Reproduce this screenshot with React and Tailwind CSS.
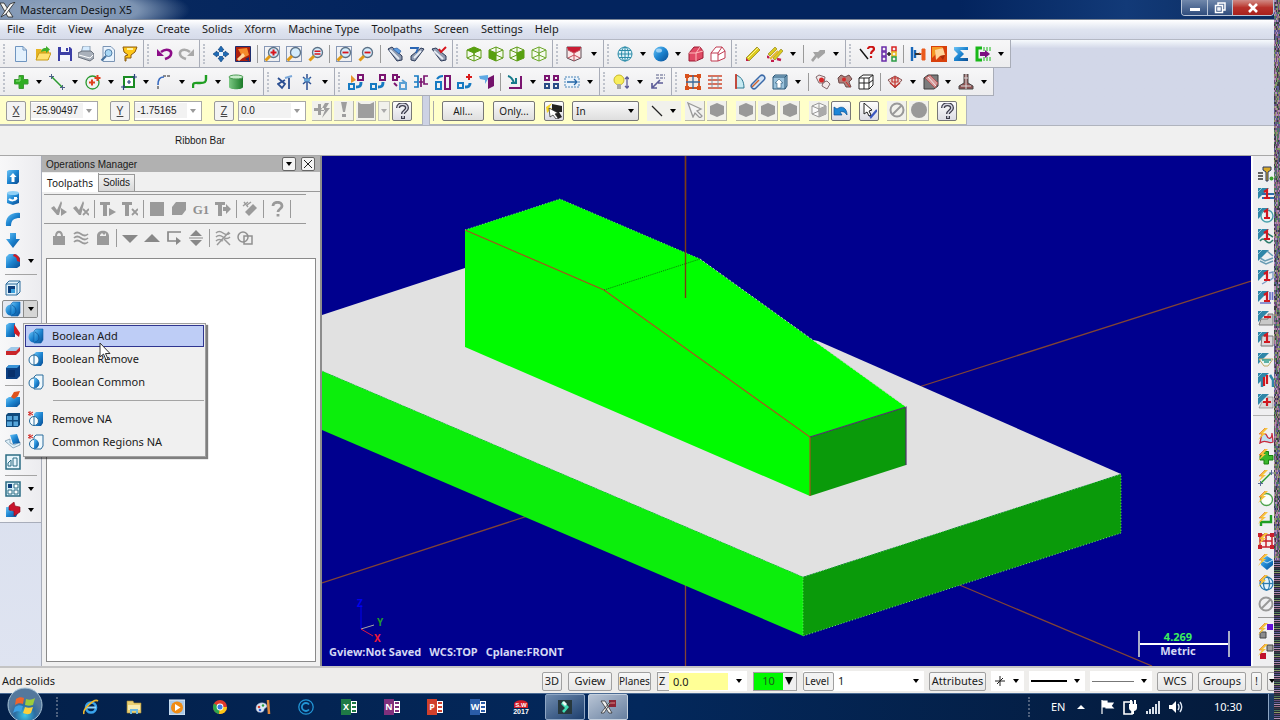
import { useState } from "react";

// small drawings, all on a 16 x 16 grid
const BLUE = "url(#blue)";
const cubeLines = "M8 1L15 4V12L8 15L1 12V4ZM1 4L8 7L15 4M8 7V15M1 12L8 9L15 12M8 1V9";
const hexPath = "M8 1L15 4V12L8 15L1 12V4Z";

function Lens({ inner, dashed }) {
    return (
        <g fill="none">
            {dashed && <path d="M.5 .5H15.500V15.500H.5Z" stroke="#1d3f78" strokeDasharray="1 1" />}
            <circle cx="9.5" cy="6.5" r="5" fill="#d3ecfb" stroke="#5c7186" strokeWidth="1.3" />
            <path d="M6 10L1.5 14.5" stroke="#e09a16" strokeWidth="3" />
            {inner}
        </g>
    );
}

function Bolt() {
    return (
        <>
            <path d="M7 0L1 6L4 6L0 12L8 5L5 5L10 0Z" fill="#f6c33c" />
            <path d="M7 0L1 6L4 6" fill="none" stroke="#e0762a" strokeWidth=".7" />
        </>
    );
}

function Tp({ children, red = "M6 5L9 3V11M6 11H12" }) {
    return (
        <>
            <path d="M0 1H11L0 12Z" fill="#2f86a8" />
            <path d="M0 5L4 1" stroke="#8fc6da" />
            {children}
            <path d={red} fill="none" stroke="#d01820" strokeWidth="2.2" />
        </>
    );
}

const ICONS = {
    new: <path d="M2.500.5H10L13.500 4V15.500H2.500Z M10 .5V4H13.500" fill="#e3f1fd" stroke="#6f95c0" />,
    open: <><path d="M1 3H6L8 5H14V14H1Z" fill="#e6b420" /><path d="M1 14L4 7H16L13 14Z" fill="#ffe272" stroke="#c89a18" /><path d="M6 6C7 2 9 2 11 2V0L15 3.500L11 7V5C9 5 8 5 6 6" fill="#3fae2c" /></>,
    save: <><path d="M1 1H13L15 3V15H1Z" fill="#3c3fa6" /><path d="M4 1H12V6H4ZM3 9H13V15H3Z" fill="#f4f5fb" /><path d="M9 2H11V5H9Z" fill="#3c3fa6" /></>,
    print: <><path d="M3 7L5 0H12L12 7" fill="#d6ecff" stroke="#8da0b4" /><path d="M0 7L4 5H13L16 8V12L12 15L0 11Z" fill="#a9b0ba" stroke="#69717c" /><path d="M1 9L12 12L15 9" stroke="#fff" fill="none" /></>,
    preview: <><path d="M3 .5H11L14.500 4V15.500H3Z" fill="#e9f3fd" stroke="#7a94b4" /><circle cx="8.500" cy="7" r="3.500" fill="#a9d7f5" stroke="#4f7ba5" /><path d="M6 10L1.500 14.500" stroke="#44709c" strokeWidth="2.200" /></>,
    cup: <><path d="M1 1H15L13 6L9 9V12H4V15H3V10L6 9L2 6Z" fill="#ffc818" stroke="#8c5a0c" /><path d="M5 3H11" stroke="#fff3a8" strokeWidth="2" /></>,
    undo: <><path d="M4 6C9 2 15 4 14 8C14 11 11 12 8 13" fill="none" stroke="#8c0c88" strokeWidth="2.600" /><path d="M0 3V10H7Z" fill="#8c0c88" /></>,
    redo: <><path d="M12 6C7 2 1 4 2 8C2 11 5 12 8 13" fill="none" stroke="#a9a9a9" strokeWidth="2.600" /><path d="M16 3V10H9Z" fill="#a9a9a9" /></>,
    fit: <><path d="M8 0L11 4H9.500V6.500H12V5L16 8L12 11V9.500H9.500V12H11L8 16L5 12H6.500V9.500H4V11L0 8L4 5V6.500H6.500V4H5Z" fill="#1f6bb5" stroke="#0d3f7a" strokeWidth=".6" /><path d="M6 6H10V10H6Z" fill="#e8f4ff" /></>,
    repaint: <><path d="M.5 .5H15.500V15.500H.5Z" fill="#b0200c" stroke="#1d2d6e" /><path d="M3 3L12 2L14 9L8 12Z" fill="#f58a2a" /><path d="M2 13L8 7L10 10L4 15Z" fill="#ffd7a0" /><path d="M10 13L14 11V15Z" fill="#1d2d6e" /></>,
    zoomWin: <Lens dashed inner={<path d="M9.500 3.500V9.500M6.500 6.500H12.500" stroke="#d8141c" strokeWidth="2" />} />,
    zoomSel: <Lens dashed />,
    zoomIn: <Lens inner={<path d="M6.500 5.200H12.500M6.500 8H12.500" stroke="#d8141c" strokeWidth="1.600" />} />,
    zoomOutW: <Lens dashed inner={<path d="M6.500 6.500H12.500" stroke="#d8141c" strokeWidth="1.800" />} />,
    zoomOut: <Lens inner={<path d="M6.500 6.500H12.500" stroke="#d8141c" strokeWidth="1.800" />} />,
    tube: <><path d="M1 3L5 1L15 10L15 14L10 15Z" fill="#8f9bb0" stroke="#2c3a58" /><path d="M3 4L12 13" stroke="#e6ebf4" strokeWidth="2" /><path d="M6 3L10 2L14 5L12 8Z" fill="#5a9be0" stroke="#1c4f96" strokeWidth=".6" /></>,
    tube2: <><path d="M15 3L12 2L2 10L2 14L6 15Z" fill="#8f9bb0" stroke="#2c3a58" /><path d="M12 5L5 12" stroke="#e6ebf4" strokeWidth="2" /><path d="M1 2H9L7 7" fill="none" stroke="#2a66b4" strokeWidth="1.800" /></>,
    tube3: <><path d="M1 3L5 2L15 10L15 14L10 15Z" fill="#8f9bb0" stroke="#2c3a58" /><path d="M3 5L12 13" stroke="#e6ebf4" strokeWidth="2" /><path d="M8 3L10 6L15 1" fill="none" stroke="#d8141c" strokeWidth="2" /></>,
    cubeTop: <><path d={cubeLines} fill="#f6fbee" stroke="#5c9a14" /><path d="M8 1L15 4L8 7L1 4Z" fill="#58a010" /></>,
    cubeFront: <><path d={cubeLines} fill="#f6fbee" stroke="#5c9a14" /><path d="M1 4L8 7V15L1 12Z" fill="#58a010" /></>,
    cubeRight: <><path d={cubeLines} fill="#f6fbee" stroke="#5c9a14" /><path d="M15 4L8 7V15L15 12Z" fill="#58a010" /></>,
    cubeIso: <path d={cubeLines} fill="#f6fbee" stroke="#6aa628" />,
    cubeRed: <><path d="M1 1H15V12L8 15L1 12Z" fill="#fbe9ea" stroke="#5f4a52" /><path d="M1 1H15L14 4L8 7L2 4Z" fill="#c91c34" /><path d="M2 4L8 7L14 4M8 7V15M2 12L8 9L14 12" fill="none" stroke="#c44a58" /></>,
    globe: <g fill="none" stroke="#2b8ba8"><circle cx="8" cy="8" r="7" fill="#dff3fa" /><ellipse cx="8" cy="8" rx="3.500" ry="7" /><path d="M1 8H15M2 4.500H14M2 11.500H14M8 1V15" /></g>,
    sphere: <><circle cx="8" cy="8" r="7.500" fill={BLUE} /><ellipse cx="6" cy="4.500" rx="3" ry="2" fill="#b6defa" opacity=".8" /></>,
    solidRed: <><path d="M1 7L6 1H12L15 5V12L8 15H1Z" fill="#e04a64" stroke="#9c1c34" /><path d="M1 7H8L12 1M8 7V15M8 7L15 5" fill="none" stroke="#fbb" /></>,
    wireRed: <path d="M1 7L6 1H12L15 5V12L8 15H1ZM1 7H8V15M8 7L12 1M8 9L15 5" fill="#fff" stroke="#c03a50" />,
    pencil: <><path d="M1 12L12 1L15 4L4 15Z" fill="#dccb1e" stroke="#8a7a10" strokeWidth=".7" /><path d="M3 12L13 2" stroke="#fff68c" /><path d="M1 12L4 15L1 15Z" fill="#c21c4c" /></>,
    pencils: <><path d="M1 8L8 1L10 3L3 10ZM6 12L14 3L16 5L8 14Z" fill="#dccb1e" stroke="#8a7a10" strokeWidth=".6" /><path d="M3 13L11 5" stroke="#e5b832" strokeWidth="2" /><path d="M0 10L2 12M4 15L7 15M10 13L14 14" stroke="#c21c4c" strokeWidth="2.400" /></>,
    pencilOff: <path d="M1 14L5 9L3 6H8L10 4H15V7L8 13L7 11L3 16Z" fill="#a3a3a3" />,
    lineQ: <><path d="M1 3L9 13" stroke="#111" strokeWidth="1.400" /><path d="M9 3C9 0 15 0 15 3C15 5 12 5 12 8M12 10V12" fill="none" stroke="#cc1414" strokeWidth="2.200" /></>,
    colors: <g fill="none" strokeWidth="1.500"><path d="M1 1H5V5H1Z" stroke="#6a2ca8" /><path d="M1 6H5V10H1Z" stroke="#6a2ca8" /><path d="M1 11H5V15H1Z" stroke="#6a2ca8" /><path d="M11 1H15V5H11Z" stroke="#d82424" /><path d="M11 6H15V10H11Z" stroke="#e8b418" /><path d="M11 11H15V15H11Z" stroke="#2c9c44" /><path d="M6 8H10M8 6V10" stroke="#222" /></g>,
    bars: <><path d="M2 1V15M5 4V12" stroke="#1766b8" strokeWidth="2.400" /><path d="M5 8H11" stroke="#333" strokeWidth="2" /><path d="M9 7L12 8V3H15V14H12V9" fill="#ea5a1c" stroke="#ea5a1c" /></>,
    orange: <><path d="M0 0H16V16H0Z" fill="#d8400c" /><path d="M1 1H12L1 12Z" fill="#f59a24" /><path d="M4 4L12 2L14 9L9 10L5 14Z" fill="#ffd49a" /><path d="M9 10L14 9L12 14Z" fill="#a82c08" /></>,
    sigma: <path d="M1 1H15V4H7L11 8L7 12H15V15H1V12L5 8L1 4Z" fill={BLUE} />,
    export: <><path d="M7 2H2V14H7" fill="none" stroke="#18b818" strokeWidth="3" /><path d="M9 1V5M12 1V5M15 1V5M9 11V15M12 11V15M15 11V15" stroke="#18b818" /><path d="M5 6H10V4L15 8L10 12V10H5Z" fill="#7c1080" /></>,
    plus: <><path d="M6 1.500H10.500V5.500H15V10H10.500V14.500H6V10H1.500V5.500H6Z" fill="#2fae22" stroke="#3c9a34" /><path d="M7 3V7H3" fill="none" stroke="#8ee080" /></>,
    line: <><path d="M3 3L13 13" stroke="#2a9a30" strokeWidth="1.500" /><path d="M0 2.500H5M2.500 0V5M11 13.500H16M13.500 11V16" stroke="#4f6288" /></>,
    circle: <><circle cx="7.500" cy="8.500" r="6.500" fill="none" stroke="#2a9a30" strokeWidth="1.300" /><path d="M7 5.500V11.500M4 8.500H10M12.500 1V7M9.500 4H15.500" stroke="#e0401c" strokeWidth="2" /></>,
    rect: <><path d="M3 3H13V13H3Z" fill="#fff" stroke="#1b8c24" strokeWidth="2" /><path d="M8 6V10M6 8H10M0 13H5M2.500 11V16M11 3H16M13.500 0V5" stroke="#2b4480" strokeWidth="1.200" /></>,
    fillet: <><path d="M2 15V11M7 2H15" stroke="#222" strokeDasharray="3 1" /><path d="M2 11C2 5 4 3 8 3" fill="none" stroke="#3a6cc0" strokeWidth="1.700" /></>,
    spline: <path d="M1 14V12C1 8 3 9 8 9C13 9 14 8 14 5V1" fill="none" stroke="#1f9e22" strokeWidth="2.400" />,
    cylinder: <><path d="M1 3V13C1 16 15 16 15 13V3Z" fill="url(#green)" /><ellipse cx="8" cy="3" rx="7" ry="2" fill="#c9eccb" stroke="#4c9c55" /></>,
    cut: <><path d="M1 4L8 10L5 14L1 10L8 6M12 4V15" fill="none" stroke="#2b4f92" strokeWidth="1.800" /><path d="M8 4L15 2" stroke="#7aa7d8" strokeWidth="2" /></>,
    burst: <><path d="M8 0V16M4 3L12 10M12 3L4 10" stroke="#2b4f92" strokeWidth="1.500" /><path d="M5 6H11" stroke="#68a8d8" strokeWidth="3" /></>,
    x1: <><path d="M10 1H15V6H10Z" fill="none" stroke="#7a1470" strokeWidth="2" /><path d="M1 10H6V15H1Z" fill="none" stroke="#167ac2" strokeWidth="2" /><path d="M8 13C12 13 13 12 13 8" fill="none" stroke="#167ac2" strokeWidth="3" /><path d="M3 1L8 6L3 9Z" fill="#e8942c" /></>,
    x2: <><path d="M10 1H15V6H10Z" fill="none" stroke="#7a1470" strokeWidth="2" /><path d="M1 10H6V15H1Z" fill="none" stroke="#167ac2" strokeWidth="2" /><path d="M8 13C12 13 13 12 13 8" fill="none" stroke="#167ac2" strokeWidth="3" /></>,
    x3: <><path d="M1 1H5V6H1ZM6 3H8" fill="none" stroke="#7a1470" strokeWidth="2" /><path d="M8 9H14V15H8ZM10 6L14 9" fill="none" stroke="#5aa0d4" strokeWidth="2" /><path d="M2 9L5 12" stroke="#7a1470" strokeWidth="2" /></>,
    x4: <><path d="M1 2H5V13H1M5 8H1" fill="none" stroke="#167ac2" strokeWidth="1.700" /><path d="M15 2H11V10H15M8 4V13M6 8H10" fill="none" stroke="#7a1470" strokeWidth="1.700" /></>,
    x5: <><path d="M10 2H15V15H10Z" fill="none" stroke="#7a1470" strokeWidth="2" /><path d="M1 8H6V15H1ZM2 5C4 2 6 2 8 2" fill="none" stroke="#167ac2" strokeWidth="2" /></>,
    x6: <><path d="M1 9H6V14H1Z" fill="none" stroke="#167ac2" strokeWidth="2" /><path d="M8 13C12 13 13 12 13 9" fill="none" stroke="#167ac2" strokeWidth="3" /><path d="M12 0V6M9 3H15" stroke="#d81a1a" strokeWidth="2" /></>,
    x7: <><path d="M9 4L15 1V12L9 15Z" fill="#74126c" /><path d="M0 2L9 1V5L6 10V6L1 5Z" fill="#5fa9e4" /></>,
    x8: <><path d="M1 2C5 3 6 6 7 9M4 9H9V4" fill="none" stroke="#167a8a" strokeWidth="2" /><path d="M2 14H14V2" fill="none" stroke="#7a1470" strokeWidth="2" /></>,
    grid4: <g fill="none" strokeWidth="2"><path d="M2 2H6V6H2ZM11 2H15V6H11Z" stroke="#7a1470" /><path d="M2 10H6V14H2ZM11 10H15V14H11Z" stroke="#2a4c86" /></g>,
    stretch: <><path d="M1 3H15V13H1Z" fill="#eaf3fb" stroke="#4c86b8" strokeDasharray="2 1" /><path d="M3 8H13M10 5L13 8L10 11" fill="none" stroke="#2668a8" strokeWidth="1.300" /></>,
    bulb: <><circle cx="6" cy="6" r="5" fill="#f8ee5c" stroke="#c8b82c" /><path d="M4 10H8V15H4Z" fill="#a8a8a8" /><path d="M14 3V14M12 5L14 3L16 5M12 12L14 14L16 12" stroke="#5c5c98" fill="none" strokeWidth="1.300" /></>,
    dim: <><path d="M6 1H15M6 4H15" stroke="#555a86" strokeDasharray="3 1" /><path d="M10 6L2 14M2 9V14H7M8 9H13" fill="none" stroke="#5c5c98" strokeWidth="1.700" /></>,
    net: <><path d="M2 2H14V14H2Z" fill="#f4e8e0" stroke="#d8501c" strokeWidth="1.800" /><path d="M8 1V15M1 8H15" stroke="#37689c" strokeWidth="1.300" /><path d="M0 0H4V4H0ZM12 0H16V4H12ZM0 12H4V16H0ZM12 12H16V16H12Z" fill="#d8501c" /></>,
    ruled: <><path d="M1 2H15M1 14H15M1 6H15M1 10H15" stroke="#d0482c" strokeWidth="1.700" /><path d="M5 2V14M11 2V14" stroke="#8a8f98" /></>,
    revolve: <><path d="M7 1C13 3 15 8 15 14H7Z" fill="#c6eaf2" stroke="#2d7891" /><path d="M7 0V15" stroke="#d0301c" strokeWidth="1.600" /></>,
    sweep: <><path d="M4 12L12 4" stroke="#3c6aa8" strokeWidth="7" strokeLinecap="round" /><path d="M4 12L12 4" stroke="#d4e4f5" strokeWidth="4" strokeLinecap="round" /><path d="M2 13L9 6" stroke="#d0602c" strokeWidth="1.500" /></>,
    box: <><path d="M1 3L3 1H15V12L13 15H1Z" fill="#9cc3dc" stroke="#2c5878" /><path d="M1 3H13V15M13 3L15 1" fill="none" stroke="#2c5878" /><path d="M7 5L11 9H9V14H5V9H3Z" fill="#fff" stroke="#2c5878" strokeWidth=".6" /></>,
    flower: <><path d="M1 3L4 1L10 3L9 9L4 9ZM8 8L12 7L15 10L12 15L7 12Z" fill="#f0e8e8" stroke="#84686c" /><circle cx="6.500" cy="6" r="2.500" fill="#d82828" /></>,
    flower2: <><path d="M1 4L4 1L8 3L12 1L15 5L12 8L14 13H9L7 9L2 9Z" fill="#b0827c" stroke="#6c4a4a" /><circle cx="7" cy="5.500" r="2" fill="#d82828" /><path d="M9 8L13 13" stroke="#d82828" /></>,
    cubeWire: <path d="M1 4L5 1H15V11L11 15H1ZM1 4H11V15M11 4L15 1M6 4V15M1 9H11L15 6" fill="#fff" stroke="#222" />,
    drill: <><path d="M1 6L8 2L15 6L8 14Z" fill="#e9d6d2" stroke="#8a5656" /><path d="M5 4H11V8H5ZM8 2V13M3 9L8 13L13 9" stroke="#c2302c" fill="none" strokeWidth="1.200" /></>,
    slab: <><path d="M1 4L5 1H15V12L11 15H1Z" fill="#7c7c7c" stroke="#3c3c3c" /><path d="M2 4L12 14L15 9L7 1Z" fill="#d89898" stroke="#a55" /><path d="M5 3L13 12" stroke="#eee" /></>,
    tower: <><path d="M6 0H10V9L15 12V15H1V12L6 9Z" fill="#8f5252" stroke="#4a4a4a" /><path d="M3 12H13M8 0V15M6 4H10" stroke="#ddd" /></>,
    spark: <path d="M0 6H4V2H7V6H10V9H7V13H4V9H0ZM11 1L7 8H11L8 16L16 6H12L15 1Z" fill="#9e9e9e" />,
    bang: <path d="M5 0H11L9 10H7ZM6 12H10V15H6Z" fill="#9e9e9e" />,
    blob: <path d="M0 0L3 2H12L16 0V16H0Z" fill="#9e9e9e" />,
    help: <><path d="M4 5C4 0 13 0 13 5C13 8 9 8 9 11M9 13V16" fill="none" stroke="#3a3a48" strokeWidth="4" /><path d="M4 5C4 0 13 0 13 5C13 8 9 8 9 11M9 13V15" fill="none" stroke="#d8d8e4" strokeWidth="1.500" /></>,
    pick: <><path d="M0 4L6 0L3 5H6L1 10" fill="#f4d428" /><path d="M6 1L16 3V9H13L16 14L12 16L9 11L6 9Z" fill="#222" /><path d="M3 5L12 10L9 11L12 15L10 16L7 12L4 14Z" fill="#fff" stroke="#222" strokeWidth=".7" /></>,
    diag: <path d="M3 3L13 13" stroke="#222" strokeWidth="1.300" />,
    arrow: <path d="M1 1L14 7L10 9L15 14L13 16L8 11L6 15Z" fill="#f4f4f4" stroke="#999" strokeWidth="1.300" />,
    hex: <path d={hexPath} fill="#999" />,
    cubeGray: <><path d={cubeLines} fill="#fafafa" stroke="#999" /><path d="M15 4L8 7V15L15 12Z" fill="#aaa" /></>,
    back: <path d="M1 4V12H9L7 9C10 8 12 9 14 12C14 5 9 2 4 6Z" fill="#1c86d8" stroke="#0c4f94" strokeWidth=".7" />,
    tick: <><path d="M8 10L10 14L16 7" fill="none" stroke="#3c58c0" strokeWidth="2.200" /><path d="M3 0L11 7L8 8L10 12L8 13L6 9L3 11Z" fill="#fff" stroke="#222" /></>,
    no: <g fill="none" stroke="#999" strokeWidth="2"><circle cx="8" cy="8" r="6.500" /><path d="M3.500 12.500L12.500 3.500" /></g>,
    dot: <circle cx="8" cy="8" r="8" fill="#999" />,
    // operations manager, all greyed out
    selAll: <path d="M0 7L3 5L6 9L10 0L11 2L8 14H6ZM10 7L16 11L10 15Z" fill="#9a9a9a" />,
    selNone: <><path d="M0 7L3 5L6 9L10 0L11 2L8 14H6Z" fill="#9a9a9a" /><path d="M10 8L16 14M16 8L10 14" stroke="#9a9a9a" strokeWidth="1.800" /></>,
    regen: <path d="M0 1H10V4H7V15H3V4H0ZM9 7L16 11L9 15Z" fill="#9a9a9a" />,
    regenX: <><path d="M0 1H10V4H7V15H3V4H0Z" fill="#9a9a9a" /><path d="M10 8L16 14M16 8L10 14" stroke="#9a9a9a" strokeWidth="1.800" /></>,
    backplot: <path d="M1 1H15V15H1Z" fill="#9a9a9a" />,
    verify: <path d="M5 1H15V9L11 14H1V6Z" fill="#9a9a9a" />,
    g1: <text x="8" y="13" textAnchor="middle" fontSize="13" fontWeight="700" fontFamily="Liberation Serif, serif" fill="#909090">G1</text>,
    feed: <path d="M0 1H10V4H7V15H3V4H0ZM8 6H11V3L16 8L11 13V10H8Z" fill="#9a9a9a" />,
    brush: <><path d="M3 11L11 3L15 7L7 15Z" fill="#9a9a9a" /><path d="M1 5L6 1M2 1L6 6M9 1L5 4" stroke="#9a9a9a" strokeWidth="1.400" /></>,
    helpGray: <path d="M4 5C4 0 13 0 13 5C13 8 9 8 9 11M9 13V15.500" fill="none" stroke="#9a9a9a" strokeWidth="2.800" />,
    lock: <path d="M2 6H4C4 -1 12 -1 12 6H14V15H2ZM6 6H10C10 2 6 2 6 6" fill="#9a9a9a" fillRule="evenodd" />,
    waves: <path d="M1 4Q4 1 8 4T15 4M1 8Q4 5 8 8T15 8M1 12Q4 9 8 12T15 12" fill="none" stroke="#9a9a9a" strokeWidth="1.700" />,
    ghost: <path d="M2 6C2 -1 14 -1 14 6V15H2ZM5 5L7 3L9 5L11 3V6H5Z" fill="#9a9a9a" fillRule="evenodd" />,
    triDown: <path d="M0 5H16L8 13Z" fill="#888" />,
    triUp: <path d="M0 12H16L8 4Z" fill="#888" />,
    insert: <><path d="M15 2H2V11H11" fill="none" stroke="#888" strokeWidth="1.700" /><path d="M10 7V15L15 11Z" fill="#888" /></>,
    scroll: <path d="M2 6L8 0L14 6ZM2 10H14L8 16ZM1 7.500H15V8.500H1Z" fill="#888" />,
    wavesX: <path d="M1 3Q4 0 8 3T15 3M1 7Q4 4 8 7T15 7M1 11Q4 8 8 11M2 15L14 2M9 9L15 15" fill="none" stroke="#9a9a9a" strokeWidth="1.500" />,
    rings: <g fill="none" stroke="#909090" strokeWidth="1.500"><circle cx="6" cy="7" r="5" /><path d="M7 6H15V14H7Z" /></g>,
    // solids
    extrude: <><path d="M2 2L4 1H14V13L12 15H2Z" fill={BLUE} /><path d="M8 4L11.500 8H9.500V13H6.500V8H4.500Z" fill="#fff" /></>,
    revSolid: <><path d="M2 3H14V13L8 15L2 13Z" fill={BLUE} /><ellipse cx="8" cy="3" rx="6" ry="2" fill="#8fd0f6" /><path d="M4 9C6 11 10 11 12 8M12 8L9 8" fill="none" stroke="#fff" strokeWidth="2" /></>,
    sweepSolid: <path d="M1 15C0 6 6 1 15 2V7C9 7 6 9 6 15Z" fill={BLUE} />,
    loft: <path d="M5 1H11V7H15L8 16L1 7H5Z" fill={BLUE} />,
    filletSolid: <><path d="M1 4L4 1H11L15 5V13L12 15H1Z" fill={BLUE} /><path d="M9 1C13 2 15 4 15 9L12 8C12 5 11 4 8 3Z" fill="#d01c24" /></>,
    shell: <><path d="M1 4L4 1H15V12L12 15H1ZM1 4H12V15M12 4L15 1" fill="#e1f2fb" stroke="#2c6c9c" /><path d="M3 6H10V13H3Z" fill="#0c3f7c" /><path d="M6 9H10V13H6Z" fill="#3aa0dc" /></>,
    boolAdd: <><circle cx="6" cy="9" r="5.500" fill={BLUE} /><path d="M6 3L8 1H15V12L13 15H6Z" fill={BLUE} stroke="#0e5ca6" strokeWidth=".6" /><path d="M7 4C9 5 11 7 11 10C11 12 9 14 7 14" fill="none" stroke="#0c4c8c" strokeWidth=".7" /></>,
    boolRemove: <><path d="M6 3L8 1H15V12L13 15H6Z" fill={BLUE} /><circle cx="6" cy="9" r="5" fill="#f6fcff" stroke="#2a6c9c" /><path d="M6 3V15" stroke="#2a6c9c" /></>,
    boolCommon: <><path d="M6 3L8 1H15V12L13 15H6Z" fill="#eef8fd" stroke="#2a6c9c" /><circle cx="6" cy="9" r="5" fill="#eef8fd" stroke="#2a6c9c" /><path d="M6 4C13 4 13 14 6 14Z" fill={BLUE} /></>,
    removeNA: <><path d="M6 3L8 1H15V12L13 15H6Z" fill={BLUE} /><circle cx="6" cy="10" r="4.500" fill="#f6fcff" stroke="#2a6c9c" /><path d="M6 5V15" stroke="#2a6c9c" /><path d="M2 0V5M0 1L5 4M5 1L0 4" stroke="#d0201c" /></>,
    commonNA: <><path d="M6 3L8 1H15V12L13 15H6Z" fill="#eef8fd" stroke="#2a6c9c" /><circle cx="6" cy="10" r="4.500" fill="#eef8fd" stroke="#2a6c9c" /><path d="M6 5C12 5 12 15 6 15Z" fill={BLUE} /><path d="M2 0V5M0 1L5 4M5 1L0 4" stroke="#d0201c" /></>,
    draft: <><path d="M1 3L4 1H10V15H1Z" fill={BLUE} /><path d="M9 2L15 11L14 15L9 11Z" fill="#d01c24" /></>,
    thicken: <><path d="M1 8L6 4H15L11 8Z" fill="#9fc8e8" /><path d="M1 8H11L15 4V8L11 12H1Z" fill="#c9262a" /></>,
    trimSolid: <><path d="M1 4L4 1H15V12L12 15H1Z" fill="#0b3f82" /><path d="M1 4L4 1H15L12 4Z" fill="#3a94d8" /><path d="M3 6H10V13H3Z" fill="#06306c" /></>,
    history: <><path d="M1 8L4 6H15V13L12 16H1Z" fill={BLUE} /><path d="M6 6L9 1L15 0L13 5L9 8Z" fill="#e0521c" /></>,
    quad: <><path d="M1 3L3 1H15V13L13 15H1Z" fill="#114a7c" /><path d="M2 4H7V8H2ZM8.500 4H13V8H8.500ZM2 9.500H7V14H2ZM8.500 9.500H13V14H8.500Z" fill="#58a6da" /></>,
    surf: <><path d="M0 8L5 6V10L9 12L15 9V12L8 15Z" fill="#dff1fb" stroke="#6c8ca4" strokeWidth=".7" /><path d="M5 2L12 1L15 10L8 11Z" fill={BLUE} /></>,
    chart: <><path d="M1 1H15V15H1Z" fill="#e6f4fb" stroke="#2c6c84" strokeWidth="1.500" /><path d="M3 12V9L6 6V12ZM8 4H12V12H8Z" fill="none" stroke="#2c6c84" /></>,
    layout: <><path d="M1 1H15V15H1Z" fill="#d4edf7" stroke="#2c6c84" strokeWidth="1.500" /><path d="M3 3H7V7H3Z" fill="#0c3f7c" /><path d="M9 3H13V7H9ZM3 9H7V13H3ZM9 9H13V13H9Z" fill="#fff" stroke="#2c6c84" /></>,
    redSolid: <><path d="M1 5H6V9H14L11 15H1Z" fill={BLUE} /><path d="M4 4L9 0L10 4L15 5V10L9 14V9L4 8Z" fill="#c8142c" stroke="#8a0c1c" strokeWidth=".6" /></>,
    // machine toolpaths
    mill: <><path d="M0 7H5M0 10H5M0 13H5" stroke="#333" strokeWidth="1.500" /><path d="M5 1H13V4L10 6V15H8V6L5 4Z" fill="#d8a828" stroke="#2a3860" /><circle cx="13.500" cy="12.500" r="2" fill="#3aa42c" /></>,
    t1: <Tp><path d="M4 7H16M4 11H16" stroke="#2f6ca8" strokeWidth="2" /></Tp>,
    t2: <Tp><circle cx="9" cy="9" r="6" fill="#e6f4f6" stroke="#4aa0ac" strokeWidth="1.400" /></Tp>,
    t3: <Tp><path d="M2 13Q5 9 8 13T15 12M7 4L15 9" stroke="#2c7c6c" strokeWidth="1.500" fill="none" /></Tp>,
    t4: <Tp red="M0 0"><path d="M2 9L7 12L15 9M2 12L8 15L15 12M9 2L15 7" stroke="#6a9cb4" strokeWidth="1.500" fill="#e9f2f6" /></Tp>,
    t5: <Tp><path d="M4 15L9 12M11 4L15 3V9L11 12" stroke="#7c9cc4" fill="none" strokeWidth="1.400" /></Tp>,
    t6: <Tp><path d="M12 2V10M14.500 2V10M2 13H13" stroke="#6c74c8" strokeWidth="1.700" /></Tp>,
    t7: <Tp red="M6 7H13"><path d="M3 9H10V4H15V15H1Z" fill="#c9c9c9" stroke="#777" /></Tp>,
    t8: <Tp><path d="M4 5H15V15H3Z" fill="#d8d8dc" stroke="#777" /></Tp>,
    t9: <Tp red="M0 0"><path d="M1 7H15L10 14H6Z" fill="#e8f6f2" stroke="#c0a868" /><path d="M4 8H13M6 10H11" stroke="#2c9c8c" strokeWidth="1.300" /></Tp>,
    t10: <Tp red="M6 5V14M9 3V12"><path d="M12 3L15 8V15M4 5V15" stroke="#2f86a8" strokeWidth="2.500" fill="none" /></Tp>,
    t11: <Tp red="M9 5V13M5 9H13"><path d="M4 9H9V4H15V15H1Z" fill="#d8d8d8" stroke="#777" strokeWidth=".6" /></Tp>,
    s1: <><path d="M3 10C4 4 8 5 9 8S14 12 14 5L15 14C10 17 8 10 2 15Z" fill="#bfe0f0" stroke="#c82a3c" strokeWidth="1.300" /><Bolt /></>,
    s2: <><path d="M6 2.500H10.500V6.500H15V11H10.500V15H6V11H2V6.500H6Z" fill="#3ab82c" stroke="#1a8012" /><Bolt /></>,
    s3: <><path d="M3 13L13 3" stroke="#2a9a30" strokeWidth="1.500" /><path d="M0 13.500H5M2.500 11V16M11 3H16M13.500 0V5" stroke="#5a6c98" /><Bolt /></>,
    s4: <><circle cx="8.500" cy="8.500" r="6" fill="#fbfffa" stroke="#4ca24c" strokeWidth="1.300" /><Bolt /></>,
    s5: <><path d="M3 14V10H13V3" fill="none" stroke="#1f9e22" strokeWidth="2.400" /><Bolt /></>,
    s6: <><path d="M2 2H14V14H2ZM8 2V14M2 8H14" fill="#f7eeee" stroke="#c8202c" strokeWidth="1.500" /><path d="M0 0H4V4H0ZM12 0H16V4H12ZM0 12H4V16H0ZM12 12H16V16H12Z" fill="#c8202c" /><Bolt /></>,
    s7: <><path d="M3 6L9 2L15 6V11L9 16L3 11Z" fill={BLUE} /><path d="M3 6L9 9L15 6" stroke="#bfe4fa" fill="none" /><Bolt /></>,
    s8: <><g fill="none" stroke="#2b7bb0" strokeWidth="1.300"><circle cx="8.500" cy="8.500" r="6.500" fill="#e4f3fa" /><ellipse cx="8.500" cy="8.500" rx="3" ry="6.500" /><path d="M2 8.500H15" /></g><Bolt /></>,
    s9: <><path d="M9 1H15V7H9Z" fill="#6410d8" /><path d="M2 9H8V15H2Z" fill="#8c8c8c" stroke="#444" /><Bolt /></>,
    s10: <><path d="M9 1H15V7H9Z" fill="#9c9c9c" stroke="#444" /><path d="M2 9H8V15H2Z" fill="#c0102c" /><Bolt /></>,
    // task bar
    ie: <><circle cx="8" cy="8.500" r="5" fill="none" stroke="#3aa4ec" strokeWidth="2.600" /><path d="M3 8.500H13" stroke="#8fd4fb" strokeWidth="2" /><path d="M1 15C-1 11 11 -1 15 2" fill="none" stroke="#f0b828" strokeWidth="1.600" /></>,
    folder: <><path d="M1 2H7L8 4H15V14H1Z" fill="#e9cf72" stroke="#a88c34" strokeWidth=".6" /><path d="M2 6H14V11H2Z" fill="#f7ecb2" /><path d="M4 15V10H12V15H10V12H6V15Z" fill="#6cb8e0" /></>,
    player: <><path d="M0 1H16V16H0Z" fill="#a8c8e8" stroke="#e4eef8" /><circle cx="8" cy="8.500" r="6" fill="#f08c14" /><path d="M6 5L11.500 8.500L6 12Z" fill="#fff" /></>,
    chrome: <><circle cx="8" cy="8" r="7" fill="#e23a2c" /><path d="M8 8L2 4.500A7 7 0 0 0 7 15Z" fill="#2fa84c" /><path d="M8 8H15A7 7 0 0 1 7 15Z" fill="#fbc916" /><circle cx="8" cy="8" r="3.400" fill="#fff" /><circle cx="8" cy="8" r="2.500" fill="#3a7ce8" /></>,
    paint: <><path d="M1 9C1 3 11 2 12 7C12 9 9 9 9 11C9 14 1 15 1 9Z" fill="#d8e8f4" stroke="#88a" strokeWidth=".5" /><circle cx="4" cy="8" r="1.300" fill="#d83c2c" /><circle cx="8" cy="6.500" r="1.200" fill="#2c9c3c" /><circle cx="5" cy="11" r="1.300" fill="#2c5cd8" /><path d="M13 1L14 15" stroke="#e0883c" strokeWidth="2.500" /></>,
    cee: <><circle cx="8" cy="8" r="7.200" fill="none" stroke="#2294d4" strokeWidth="1.300" /><path d="M11 5.500A4 4 0 1 0 11 10.500" fill="none" stroke="#2294d4" strokeWidth="1.800" /></>,
    sai: <><path d="M1 9V5C2 0 14 0 15 5V9Z" fill="#d01c28" /><text x="8" y="8" textAnchor="middle" fontSize="6" fontWeight="700" fontFamily="Liberation Sans, sans-serif" fill="#fff">S.W</text><text x="8" y="15" textAnchor="middle" fontSize="7" fontWeight="700" fontFamily="Liberation Sans, sans-serif" fill="#fff">2017</text></>,
    filmora: <><path d="M1 1H15V15H1Z" fill="#27383d" /><path d="M6 2L12 8L7 14L5 12L8 9L4 5Z" fill="#3fdcb4" /><path d="M5 4L7 2L10 5L8 7Z" fill="#e8fff8" /></>,
    mcam: <><path d="M9 1H16V8H9Z" fill="#8c2434" /><path d="M1 2H5L12 14H9ZM11 3L4 14H1L9 4Z" fill="#f0f0f0" stroke="#222" strokeWidth=".7" /><path d="M10 4H15" stroke="#d88" /></>,
    xlogo: <><path d="M0 1H4L13 15H8Z" fill="#f4f4f0" stroke="#222" strokeWidth=".8" /><path d="M10 2L15 0L6 12L1 15Z" fill="#fff" stroke="#222" strokeWidth=".8" /></>,
    flag: <path d="M3 1V15M3 2H8V4H14L12 7L14 9H7V8H3Z" fill="#fff" stroke="#fff" strokeWidth="1.200" />,
    plug: <><path d="M2 3H10V15H2Z" fill="none" stroke="#fff" strokeWidth="1.600" /><path d="M7 5H15V9C15 11 13 12 12 12V15H10V12C8 12 7 10 7 9ZM8 1H10V5H8ZM12 1H14V5H12Z" fill="#fff" /></>,
    signal: <path d="M1 12H3V15H1ZM4 10H6V15H4ZM7 8H9V15H7ZM10 5H12V15H10ZM13 2H15V15H13Z" fill="#d8e0ea" />,
    speaker: <><path d="M1 6H4L8 2V14L4 10H1Z" fill="#fff" /><path d="M10 5Q12 8 10 11M12 3Q15.500 8 12 13" fill="none" stroke="#dfe8f4" strokeWidth="1.400" /></>,
};

function Icon({ name }) {
    return (
        <svg viewBox="0 0 16 16" className="block size-4 shrink-0" aria-hidden="true">
            {ICONS[name]}
        </svg>
    );
}

function Caret({ color = "#000" }) {
    return (
        <svg viewBox="0 0 8 8" className="block size-2 shrink-0" aria-hidden="true">
            <path d="M1 2H7L4 6Z" fill={color} />
        </svg>
    );
}

// "|" is a divider, "v" a drop-down arrow, everything else an icon
function Tools({ items }) {
    return items.split(" ").map((it, i) => {
        if (it === "|") return <span key={i} className="h-[18px] w-px shrink-0 bg-[#9a9a9a]" />;
        return (
            <button key={i} type="button" aria-label={it === "v" ? "more" : it} className="shrink-0">
                {it === "v" ? <Caret /> : <Icon name={it} />}
            </button>
        );
    });
}

function Grip({ className }) {
    return <span aria-hidden="true" className={`w-[3px] border-l-2 border-dotted border-[#bfc3cc] ${className}`} />;
}

function Group({ width, items }) {
    return (
        <div className={`relative flex h-7 shrink-0 items-center justify-between border-r border-b border-[#a9adb8] bg-linear-to-b from-[#f7f7f8] to-[#ececee] pr-[5px] pl-[13px] ${width}`}>
            <Grip className="absolute left-[3px] h-5" />
            <Tools items={items} />
        </div>
    );
}

const MENUS = ["File", "Edit", "View", "Analyze", "Create", "Solids", "Xform", "Machine Type", "Toolpaths", "Screen", "Settings", "Help"];

function TitleBar() {
    return (
        <header className="flex h-5 items-start justify-between border-b border-[#7c8798] bg-[radial-gradient(ellipse_130px_28px_at_60px_10px,#93a6bf_0%,#7c93b2_60%,transparent_100%),linear-gradient(90deg,#0a2b5e,#03245e_30%,#03245e_75%,#123a78_88%,#0a2a5c)]">
            <h1 className="flex items-center gap-1 text-[11px] leading-5 text-[#101418]">
                <Icon name="xlogo" />
                Mastercam Design X5
            </h1>
            <div className="mr-[6px] flex h-4 overflow-hidden rounded-b border border-t-0 border-[#b8c4d6] text-white">
                <button type="button" aria-label="Minimize" className="grid w-[26px] place-items-center border-r border-[#b8c4d6] bg-linear-to-b from-[#7188ab] to-[#2f4c7c]">
                    <span className="mt-1 h-[3px] w-[10px] bg-white" />
                </button>
                <button type="button" aria-label="Restore" className="grid w-[25px] place-items-center border-r border-[#b8c4d6] bg-linear-to-b from-[#7188ab] to-[#2f4c7c]">
                    <svg viewBox="0 0 12 12" className="size-3"><path d="M4 3V1H11V8H9M1.500 3.500H8.500V10.500H1.500ZM4 6H6V8H4Z" fill="none" stroke="#fff" strokeWidth="1.500" /></svg>
                </button>
                <button type="button" aria-label="Close" className="grid w-10 place-items-center bg-linear-to-b from-[#d08a86] via-[#b8322c] to-[#a8201c]">
                    <svg viewBox="0 0 12 12" className="size-3"><path d="M2 2L10 10M10 2L2 10" stroke="#fff" strokeWidth="2.600" /></svg>
                </button>
            </div>
        </header>
    );
}

function Coord({ axis, value }) {
    return (
        <div className="flex w-[92px] shrink-0 items-center gap-1">
            <label htmlFor={`pos-${axis}`} className="grid h-5 w-5 place-items-center rounded-xs border border-[#9a9a9a] bg-[#f3f3f3] text-[12px] text-[#444] underline">
                {axis}
            </label>
            <div className="flex h-5 w-[68px] items-center gap-[2px] border border-[#a8a8a8] bg-white pr-1">
                <input id={`pos-${axis}`} defaultValue={value} className="w-0 flex-1 bg-[#f2f2f2] pl-[2px] font-['Liberation_Sans',sans-serif] text-[10px] outline-none" />
                <Caret color="#999" />
            </div>
        </div>
    );
}

function FlatButton({ name, raised }) {
    return (
        <button type="button" aria-label={name} className={`grid size-5 shrink-0 place-items-center ${raised ? "rounded-xs border border-[#777] bg-linear-to-b from-[#fdfdfd] to-[#dcdce4]" : "border-r border-b border-[#b8b8a8] bg-[#f1f1ec]"}`}>
            <Icon name={name} />
        </button>
    );
}

function InputBar() {
    return (
        <div className="flex h-[29px] items-center">
            <div className="flex h-full w-[422px] shrink-0 items-center gap-3 border-b border-[#b0b4be] bg-[#ffffca] pt-px pl-[6px]">
                <Coord axis="X" value="-25.90497" />
                <Coord axis="Y" value="-1.75165" />
                <Coord axis="Z" value="0.0" />
                <div className="-ml-[6px] flex items-center gap-[2px]">
                    <FlatButton name="spark" />
                    <FlatButton name="bang" />
                    <FlatButton name="blob" />
                    <button type="button" aria-label="more" className="grid h-5 w-3 place-items-center border border-[#c8c8bc] bg-[#f1f1ec]"><Caret color="#aaa" /></button>
                    <FlatButton name="help" raised />
                </div>
            </div>
            <div className="h-full w-2 shrink-0 border-r border-l border-[#b0b4be] bg-[#cdd2e4]" />
            <div className="flex h-full w-[537px] shrink-0 items-center border-r border-b border-[#b0b4be] bg-[#ffffca] pt-px pl-[3px]">
                <span className="mr-2 h-5 w-px bg-[#aaa]" />
                <button type="button" className="h-5 w-[42px] rounded-xs border border-[#777] bg-linear-to-b from-[#fafafa] to-[#dedede] text-[10px] leading-4">All...</button>
                <button type="button" className="mx-[9px] h-5 w-[42px] rounded-xs border border-[#777] bg-linear-to-b from-[#fafafa] to-[#dedede] text-[10px] leading-4">Only...</button>
                <FlatButton name="pick" raised />
                <div className="relative mx-2 flex h-5 w-[67px] items-center">
                    <select aria-label="Selection mode" className="h-5 w-full appearance-none rounded-xs border border-[#777] bg-linear-to-b from-[#fafafa] to-[#dedede] pl-[3px] text-[10px] leading-4 outline-none">
                        <option>In</option>
                    </select>
                    <span className="pointer-events-none absolute right-1"><Caret /></span>
                </div>
                <div className="flex h-5 w-[34px] items-center gap-1 bg-[#f1f1ec] pl-[2px]"><Icon name="diag" /><Caret /></div>
                <div className="ml-1 flex gap-[2px]"><FlatButton name="arrow" /><FlatButton name="hex" /></div>
                <div className="ml-[9px] flex gap-[2px]"><FlatButton name="hex" /><FlatButton name="hex" /><FlatButton name="hex" /></div>
                <div className="ml-[9px] flex gap-[2px]"><FlatButton name="cubeGray" /><FlatButton name="back" raised /></div>
                <div className="ml-2"><FlatButton name="tick" raised /></div>
                <div className="ml-2 flex gap-[2px]"><FlatButton name="no" /><FlatButton name="dot" /></div>
                <div className="ml-2"><FlatButton name="help" raised /></div>
            </div>
        </div>
    );
}

const BOOLEANS = [
    ["boolAdd", "Boolean Add"],
    ["boolRemove", "Boolean Remove"],
    ["boolCommon", "Boolean Common"],
    null,
    ["removeNA", "Remove NA"],
    ["commonNA", "Common Regions NA"],
];

function BooleanMenu({ active, onPick }) {
    return (
        <div role="menu" className="absolute top-[22px] left-[18px] z-10 flex w-[183px] flex-col gap-px border border-[#a0a0a0] bg-[#f0f0f0] px-px pt-px pb-[3px] shadow-[2px_2px_1px_rgba(0,0,0,0.5)]">
            {BOOLEANS.map((b, i) =>
                b ? (
                    <button
                        key={i}
                        type="button"
                        role="menuitem"
                        onMouseEnter={() => onPick(b[1])}
                        className={`flex h-[22px] items-center gap-2 border pl-[2px] text-[11px] ${active === b[1] ? "border-[#2f3590] bg-[#becdf6]" : "border-transparent"}`}
                    >
                        <Icon name={b[0]} />
                        {b[1]}
                    </button>
                ) : (
                    <div key={i} className="ml-7 flex h-[13px] items-center"><span className="h-px w-full bg-[#a4a4a4]" /></div>
                )
            )}
            {/* mouse pointer */}
            <svg viewBox="0 0 12 19" className="absolute top-[18px] left-[75px] h-[19px] w-3">
                <path d="M1 1V15L4.500 12L7 18L9 17L6.500 11.500H11Z" fill="#fff" stroke="#333" />
            </svg>
        </div>
    );
}

function SolidsBar() {
    const [active, setActive] = useState("Boolean Add");
    return (
        <aside className="w-[42px] shrink-0 border-r border-[#a8adba] bg-linear-to-b from-[#d3daea] to-[#dfe4f1]">
            <div className="flex h-[367px] flex-col items-start gap-[5px] border-b border-[#a8adba] bg-linear-to-r from-[#f8f8f9] to-[#ececef] pt-[13px] pl-[5px]">
                <Tools items="extrude revSolid sweepSolid loft" />
                <div className="flex items-center gap-[6px]"><Tools items="filletSolid v" /></div>
                <span className="h-px w-8 bg-[#a4a4a4]" />
                <Tools items="shell" />
                <div className="relative flex h-4 items-center">
                    <div className="-mx-[3px] flex h-[18px] shrink-0 items-center rounded-xs border border-[#8a8a8a] bg-[#e4e8f0]">
                        <button type="button" aria-label="Boolean" className="px-[2px]"><Icon name="boolAdd" /></button>
                        <button type="button" aria-label="Boolean list" className="grid h-full w-[14px] place-items-center border-l border-[#8a8a8a] bg-[#d6d6d6]"><Caret /></button>
                    </div>
                    <BooleanMenu active={active} onPick={setActive} />
                </div>
                <Tools items="draft thicken trimSolid" />
                <span className="h-px w-8 bg-[#a4a4a4]" />
                <Tools items="history quad surf chart" />
                <span className="h-px w-8 bg-[#a4a4a4]" />
                <div className="flex items-center gap-[6px]"><Tools items="layout v" /></div>
                <div className="flex items-center gap-[6px]"><Tools items="redSolid v" /></div>
            </div>
        </aside>
    );
}

function OperationsManager() {
    const [tab, setTab] = useState("Toolpaths");
    return (
        <section className="flex w-[280px] shrink-0 flex-col border-r-2 border-[#8c8c8c] bg-[#f0f0f0]">
            <div className="flex h-4 items-center gap-[5px] bg-[#b1b1b1] pr-[5px] pl-1 font-['Liberation_Sans',sans-serif]">
                <h2 className="flex-1 text-[10px]">Operations Manager</h2>
                <button type="button" aria-label="Panel menu" className="grid size-[14px] place-items-center rounded-xs border border-[#666] bg-[#f4f4f4]"><Caret /></button>
                <button type="button" aria-label="Close panel" className="grid size-[14px] place-items-center rounded-xs border border-[#666] bg-[#f4f4f4]">
                    <svg viewBox="0 0 8 8" className="size-2"><path d="M0 0L8 8M8 0L0 8" stroke="#222" /></svg>
                </button>
            </div>
            <div role="tablist" className="flex h-5 items-end border-b border-[#999] text-[10px]">
                {["Toolpaths", "Solids"].map((t) => (
                    <button
                        key={t}
                        type="button"
                        role="tab"
                        aria-selected={tab === t}
                        onClick={() => setTab(t)}
                        className={t === tab ? "-mb-px h-[19px] w-[57px] border-r border-[#999] bg-white leading-4" : "h-[17px] w-9 border-t border-r border-[#999] bg-linear-to-b from-[#f4f4f4] to-[#d8d8d8] font-['Liberation_Sans',sans-serif] leading-4"}
                    >
                        {t}
                    </button>
                ))}
            </div>
            <div className="mt-[2px] mr-[14px] ml-[2px] flex h-[30px] items-center gap-[6px] border-y border-[#999] pl-[7px] [&>span]:-mx-px">
                <Tools items="selAll selNone | regen regenX | backplot verify g1 feed | brush | helpGray |" />
            </div>
            <div className="mr-[14px] ml-[2px] flex h-7 items-center gap-[6px] pl-[7px] [&>span]:-mx-px">
                <Tools items="lock waves ghost | triDown triUp insert scroll | wavesX rings" />
            </div>
            <div className="mt-[6px] mr-1 mb-1 ml-1 flex-1 border border-[#8a8a8a] bg-white" />
        </section>
    );
}

function Viewport() {
    return (
        <main className="relative min-w-0 flex-1 overflow-hidden bg-[#00008e]">
            <svg viewBox="322 156 929 510" preserveAspectRatio="xMinYMin slice" className="block h-full w-full">
                <g stroke="#824434" strokeWidth="1.300">
                    <path d="M685.500 156V200M685.500 580V666M900 393L1251 281M322 583L540 512M950 581L1152 666" />
                </g>
                <path d="M322 315L465 268L818 341L1121 474L803 577L322 371Z" fill="#e1e1e1" />
                <path d="M322 371L803 577V636L322 430Z" fill="#0cee0c" />
                <path d="M803 577L1121 474V533L803 636Z" fill="#0a9a0a" />
                <path d="M465 230L560 199L700 259L906 407L810 437L604 290Z" fill="#00ff00" />
                <path d="M465 230L604 290L810 437V496L465 347Z" fill="#00fb00" />
                <path d="M810 437L906 407V465L810 496Z" fill="#0a9a0a" />
                <path d="M465 230L604 290L810 437V496" fill="none" stroke="#a8541c" strokeWidth="1.200" />
                <path d="M604 290L700 259" stroke="#0a7a0a" strokeDasharray="1 1" />
                <path d="M810 437L906 407V465" fill="none" stroke="#50306c" strokeWidth="1.200" />
                <path d="M700 259L906 407" stroke="#b8d8b8" strokeDasharray="2 2" />
                <path d="M465 230L560 199L700 259M803 577L1121 474V533L803 636M322 371L803 577V636" fill="none" stroke="#6cf06c" strokeDasharray="1 2" />
                <path d="M685.500 156V298" stroke="#7c3c14" strokeWidth="1.400" />
                <path d="M361 605V629" stroke="#0000f0" />
                <path d="M361 629L374 625" stroke="#a8a8a8" />
                <path d="M361 629L373 636" stroke="#e01840" />
                <g fontFamily="'Noto Sans', sans-serif" fontWeight="700" fontSize="10">
                    <text x="357" y="607" fill="#0000f0">Z</text>
                    <text x="377" y="626" fill="#1f9a2c">Y</text>
                    <text x="374" y="642" fill="#f01838">X</text>
                </g>
            </svg>
            <p className="absolute bottom-[6px] left-[7px] flex gap-2 text-[11px] leading-4 font-bold text-[#d4d8f4]">
                <span>Gview:Not Saved</span>
                <span>WCS:TOP</span>
                <span>Cplane:FRONT</span>
            </p>
            <div className="absolute right-[21px] bottom-[9px] w-[92px] border-x-2 border-[#a8acc8] text-center text-[11px] leading-[12px] font-bold">
                <div className="border-b-2 border-white pr-3 text-[#3cf05c]">4.269</div>
                <div className="pr-3 text-[#d4d8f4]">Metric</div>
            </div>
        </main>
    );
}

function ToolpathBar() {
    return (
        <aside className="w-[29px] shrink-0 border-l-2 border-white bg-[#efeff1]">
            <div className="flex h-[260px] flex-col justify-between border-b border-[#b4b4b4] pt-[10px] pb-[6px] pl-[5px]">
                <Tools items="mill t1 t2 t3 t4 t5 t6 t7 t8 t9 t10 t11" />
            </div>
            <div className="flex flex-col gap-[5px] pt-3 pl-[5px]">
                <Tools items="s1 s2 s3 s4 s5 s6 s7 s8 no" />
                <span className="h-px w-[18px] bg-[#999]" />
                <Tools items="s9 s10" />
            </div>
        </aside>
    );
}

function StatusButton({ width, children }) {
    return <button type="button" className={`h-[19px] rounded-xs border border-[#a0a0a0] bg-linear-to-b from-[#f8f8f8] to-[#e6e6e6] leading-4 whitespace-nowrap ${width}`}>{children}</button>;
}

function LinePick({ label, width, children }) {
    return (
        <button type="button" aria-label={label} className={`flex h-5 items-center justify-between bg-white pr-1 ${width}`}>
            {children}
            <Caret />
        </button>
    );
}

function StatusBar() {
    return (
        <footer className="flex h-[27px] items-center justify-between border-t-2 border-[#c4c4c4] bg-[#eeedeb] pt-px pl-[2px] text-[11px]">
            <p>Add solids</p>
            <div className="flex shrink-0 items-center gap-[5px]">
                <div className="flex items-center gap-[6px]">
                    <StatusButton width="w-5">3D</StatusButton>
                    <StatusButton width="w-11">Gview</StatusButton>
                    <StatusButton width="w-[33px] text-[10px]">Planes</StatusButton>
                    <div className="flex h-5 w-[90px] items-center bg-white pr-1">
                        <label htmlFor="depth" className="h-[19px] w-3 border border-r-0 border-[#a0a0a0] bg-[#f0f0f0] pl-px leading-4">Z</label>
                        <input id="depth" defaultValue="0.0" className="mr-auto h-[17px] w-[59px] bg-[#ffff96] pl-1 outline-none" />
                        <Caret />
                    </div>
                    <div className="flex h-[19px] w-11 items-center border border-[#a0a0a0] bg-[#f0f0f0]">
                        <button type="button" aria-label="Color 10" className="h-full w-[29px] bg-[#00f800] leading-4 text-[#1b5c1b]">10</button>
                        <svg viewBox="0 0 12 10" className="h-[10px] w-3"><path d="M2 1H10L6 9Z" /></svg>
                    </div>
                    <div className="flex h-5 w-[121px] items-center bg-white pr-1">
                        <label htmlFor="level" className="h-[19px] w-[31px] shrink-0 rounded-xs border border-[#a0a0a0] bg-[#f2f2f2] pl-px text-[10px] leading-4">Level</label>
                        <input id="level" defaultValue="1" className="w-0 flex-1 pl-1 outline-none" />
                        <Caret />
                    </div>
                </div>
                <StatusButton width="w-[57px]">Attributes</StatusButton>
                <LinePick label="Point style" width="w-[33px] pl-1">
                    <svg viewBox="0 0 10 10" className="size-[10px]"><path d="M5 0V10M0 5H10M2 8L8 2" stroke="#222" /></svg>
                </LinePick>
                <LinePick label="Line style" width="w-14 pl-[2px]"><span className="h-[2px] w-9 bg-black" /></LinePick>
                <LinePick label="Line width" width="w-[62px] pl-[2px]"><span className="h-px w-[42px] bg-[#777]" /></LinePick>
                <StatusButton width="w-9">WCS</StatusButton>
                <StatusButton width="w-12">Groups</StatusButton>
                <StatusButton width="w-[11px]">!</StatusButton>
                <StatusButton width="w-[13px]"><Caret /></StatusButton>
            </div>
        </footer>
    );
}

function Office({ letter, color }) {
    return (
        <span className="flex h-4 w-4 items-center">
            <span className={`grid h-4 w-[10px] place-items-center text-[9px] font-bold text-white ${color}`}>{letter}</span>
            <span className="flex h-3 w-[6px] flex-col justify-between bg-white p-px">
                <span className={`h-[2px] ${color}`} />
                <span className={`h-[2px] ${color}`} />
                <span className={`h-[2px] ${color}`} />
            </span>
        </span>
    );
}

function TaskBar() {
    return (
        <nav className="flex h-[27px] items-center border-t border-[#4a6b94] bg-linear-to-r from-[#03204a] via-[#03285c] to-[#041a3a] text-white">
            <button type="button" aria-label="Start" className="relative -mt-5 -mb-4 ml-[7px] shrink-0">
                <svg viewBox="0 0 36 36" className="block size-9">
                    <circle cx="18" cy="18" r="17" fill="url(#orb)" stroke="#a9c4d8" />
                    <path d="M9 12C12 9.500 15 10 17 11L16 17C13 16 11 16 8 18Z" fill="#f0642c" />
                    <path d="M19 12C22 13 25 13 28 11L26 18C23 19 21 19 18 18Z" fill="#9ccc3c" />
                    <path d="M8 20C11 18 13 18 16 19L14 25C12 24 9 24 6 26Z" fill="#3ca0e4" />
                    <path d="M18 20C20 21 23 21 26 20L24 26C21 28 19 27 16 26Z" fill="#fcd03c" />
                </svg>
            </button>
            <Grip className="mr-6 ml-[13px] h-5 opacity-40" />
            <div className="flex gap-[27px]">
                <Tools items="ie folder player chrome paint cee" />
                <button type="button" aria-label="Excel"><Office letter="X" color="bg-[#1f7a45]" /></button>
                <button type="button" aria-label="OneNote"><Office letter="N" color="bg-[#80307c]" /></button>
                <button type="button" aria-label="PowerPoint"><Office letter="P" color="bg-[#d0402c]" /></button>
                <button type="button" aria-label="Word"><Office letter="W" color="bg-[#2a5ca8]" /></button>
                <Tools items="sai" />
            </div>
            <button type="button" aria-label="Filmora" className="ml-4 grid h-[26px] w-10 place-items-center rounded-xs border border-[#8ea6c4] bg-linear-to-br from-[#6f8bad] to-[#1d3f6e]"><Icon name="filmora" /></button>
            <button type="button" aria-label="Mastercam" className="ml-[3px] grid h-[26px] w-10 place-items-center rounded-xs border border-[#c4d0de] bg-linear-to-br from-[#b8c4d4] to-[#6880a0]"><Icon name="mcam" /></button>
            <div className="ml-auto flex items-center">
                <Grip className="mr-5 h-5 opacity-40" />
                <span className="mr-[10px] w-4 text-[11px]">EN</span>
                <svg viewBox="0 0 8 8" className="mr-[14px] size-2"><path d="M0 6H8L4 2Z" fill="#fff" /></svg>
                <div className="flex gap-[7px]"><Tools items="flag plug signal speaker" /></div>
                <time className="mr-[26px] ml-[30px] text-[11px]">10:30</time>
                <span className="h-[26px] w-3 border-l border-[#8ea6c4] bg-[#1b3a62]" />
            </div>
        </nav>
    );
}

// coloured static along the right border
const STATIC = ["#6c4a78", "#4f7a5c", "#a07088", "#5c5c94", "#8a9464", "#3c3c44", "#b08cb4"].map((color, k, all) => {
    let seed = 7;
    let d = "";
    for (let i = 0; i < 2160; i++) {
        seed = (seed * 1103515245 + 12345) % 2147483648;
        const y = Math.floor(i / 6);
        const pick = y < 280 ? Math.floor(seed / 65536) % all.length : (y * 3) % all.length;
        if (pick === k) d += `M${i % 6} ${y * 2}h1v${y < 280 ? 2 : 1}h-1z`;
    }
    return { color, d };
});

function StaticStrip() {
    return (
        <svg viewBox="0 0 6 720" preserveAspectRatio="none" className="pointer-events-none absolute top-0 right-0 h-full w-[6px]" aria-hidden="true">
            <path d="M0 560H6V720H0Z" fill="#222838" />
            {STATIC.map((s) => <path key={s.color} d={s.d} fill={s.color} />)}
        </svg>
    );
}

export default function App() {
    return (
        <div className="relative flex h-screen flex-col overflow-hidden bg-[#f0f0f0] font-['Noto_Sans',sans-serif] text-[11px] text-[#1a1a1a]">
            <svg className="absolute size-0" aria-hidden="true">
                <defs>
                    <linearGradient id="blue" x1="0" y1="0" x2="1" y2="1">
                        <stop offset="0" stopColor="#6cc4f6" />
                        <stop offset=".5" stopColor="#1c84d0" />
                        <stop offset="1" stopColor="#0a4c92" />
                    </linearGradient>
                    <linearGradient id="green">
                        <stop offset="0" stopColor="#7cc884" />
                        <stop offset="1" stopColor="#1a7a28" />
                    </linearGradient>
                    <radialGradient id="orb" cy=".8">
                        <stop offset="0" stopColor="#3cc8ec" />
                        <stop offset=".6" stopColor="#2c6ca0" />
                        <stop offset="1" stopColor="#54789c" />
                    </radialGradient>
                </defs>
            </svg>
            <TitleBar />
            <nav className="flex h-5 items-center gap-3 border-b border-[#b4b8c4] bg-linear-to-b from-white via-[#dfe4f0] to-[#d6dbea] pl-[7px]">
                {MENUS.map((m) => <button key={m} type="button" className="whitespace-nowrap">{m}</button>)}
            </nav>
            <div className="border-b border-[#b0b4be] bg-linear-to-b from-[#f6fafd] via-[#d2d7e8] via-10% to-[#d2d7e8]">
                <div className="flex">
                    <Group width="w-36" items="new open save print preview cup" />
                    <Group width="w-14" items="undo redo" />
                    <Group width="w-[253px]" items="fit repaint | zoomWin zoomSel zoomIn | zoomOutW zoomOut | tube tube2 tube3" />
                    <Group width="w-[100px]" items="cubeTop cubeFront cubeRight cubeIso" />
                    <Group width="w-[51px]" items="cubeRed v" />
                    <Group width="w-32" items="globe v sphere v solidRed wireRed" />
                    <Group width="w-[114px]" items="pencil pencils v | pencilOff v" />
                    <Group width="w-[165px]" items="lineQ colors | bars orange sigma export v" />
                </div>
                <div className="flex">
                    <Group width="w-[264px]" items="plus v line v circle v rect v fillet v spline v cylinder v" />
                    <Group width="w-[71px]" items="cut burst v" />
                    <Group width="w-[265px]" items="x1 x2 x3 x4 x5 x6 x7 | x8 v grid4 stretch v" />
                    <Group width="w-[72px]" items="bulb v dim" />
                    <Group width="w-[322px]" items="net ruled revolve sweep box v | flower flower2 cubeWire | drill v slab v tower v" />
                </div>
                <InputBar />
            </div>
            <p className="h-[30px] border-b border-[#a8a8a8] bg-[#f0f0f0] pl-[175px] font-['Liberation_Sans',sans-serif] text-[10px] leading-[30px]">Ribbon Bar</p>
            <div className="flex min-h-0 flex-1">
                <SolidsBar />
                <OperationsManager />
                <Viewport />
                <ToolpathBar />
            </div>
            <StatusBar />
            <TaskBar />
            <StaticStrip />
        </div>
    );
}
